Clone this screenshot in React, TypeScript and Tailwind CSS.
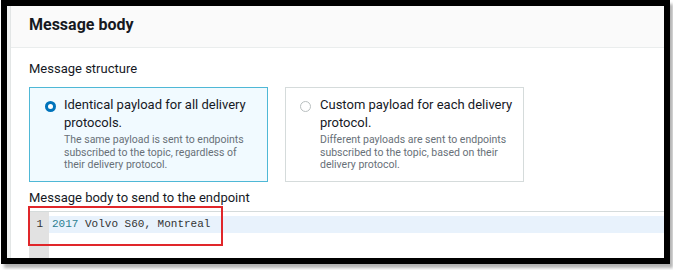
const font = { fontFamily: 'Roboto, "Open Sans", sans-serif' };
const mono = { fontFamily: '"Liberation Mono", "DejaVu Sans Mono", monospace' };

function Tile({
  selected,
  title,
  body,
}: {
  selected: boolean;
  title: string;
  body: string;
}) {
  return (
    <div
      className={`w-[239px] h-[95px] border flex gap-[8px] pl-[14px] pr-[4px] pt-[8px] ${
        selected ? "bg-[#f1faff] border-[#4fb8d6]" : "bg-white border-[#d5dbdb]"
      }`}
    >
      {/* radio */}
      <div className="pt-[5px] shrink-0 w-[12px]">
        {selected ? (
          <div className="w-[11px] h-[11px] ml-[1px] rounded-full bg-[#0073bb] flex items-center justify-center">
            <div className="w-[5px] h-[5px] rounded-full bg-white" />
          </div>
        ) : (
          <div className="w-[11px] h-[11px] rounded-full border border-[#b9bfc0] bg-white" />
        )}
      </div>
      <div>
        <div className="text-[13px] leading-[18px] text-[#16191f]">{title}</div>
        <div className="max-w-[192px] text-[10.5px] leading-[12.5px] text-[#687078] mt-[2px]">{body}</div>
      </div>
    </div>
  );
}

export default function App() {
  return (
    <div className="w-[673px] h-[270px] bg-white" style={font}>
      <div className="ml-[1px] w-[669px] h-[264px] border-[6px] border-black bg-[#f2f3f3] overflow-hidden relative shadow-[3px_4px_3px_rgba(0,0,0,0.3)]">
        <div className="ml-[3px] h-full bg-white border-l border-[#e3e6e6]">
          {/* header */}
          <div className="h-[42px] bg-[#fafafa] border-b border-[#eaeded] pl-[18px] pb-[4px] flex items-center">
            <h2 className="text-[16px] font-bold text-[#16191f]">Message body</h2>
          </div>

          <div className="pl-[18px] pt-[12px]">
            <div className="text-[13px] leading-[18px] text-[#16191f]">Message structure</div>
            <div className="flex gap-[17px] mt-[9px]">
              <Tile
                selected
                title="Identical payload for all delivery protocols."
                body="The same payload is sent to endpoints subscribed to the topic, regardless of their delivery protocol."
              />
              <Tile
                selected={false}
                title="Custom payload for each delivery protocol."
                body="Different payloads are sent to endpoints subscribed to the topic, based on their delivery protocol."
              />
            </div>
            <div className="text-[13px] leading-[18px] text-[#16191f] mt-[7px]">
              Message body to send to the endpoint
            </div>
          </div>

          {/* editor */}
          <div className="ml-[18px] mt-[4px] border-t border-[#d5dbdb] flex h-[60px]">
            <div className="w-[20px] bg-[#e2e2e2] shrink-0 pt-[4px]">
              <div className="h-[17px] leading-[17px] text-right pr-[6px] text-[11px] text-[#333]" style={mono}>
                1
              </div>
            </div>
            <div className="flex-1 pt-[4px]">
              <div className="h-[17px] leading-[17px] bg-[#e8f2fc] pl-[3px] text-[11px] text-[#333]" style={mono}>
                <span className="text-[#2b7e8f]">2017</span> Volvo S60, Montreal
              </div>
            </div>
          </div>
        </div>

        {/* annotation */}
        <div className="absolute left-[21px] top-[200px] w-[195px] h-[40px] border-2 border-[#e0262a]" />
      </div>
    </div>
  );
}
